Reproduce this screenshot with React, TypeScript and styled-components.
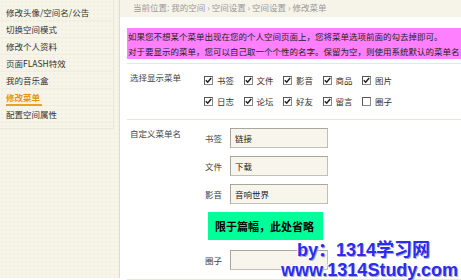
import React from "react";
import styled, { createGlobalStyle } from "styled-components";

const GlobalStyle = createGlobalStyle`
  html, body {
    margin: 0;
    padding: 0;
    background: #ffffff;
  }
  body {
    font-family: "Noto Sans CJK SC", "Noto Sans", sans-serif;
    font-size: 8.5px;
    color: #333;
  }
`;

const sideMenu = [
  "修改头像/空间名/公告",
  "切换空间模式",
  "修改个人资料",
  "页面FLASH特效",
  "我的音乐盒",
  "修改菜单",
  "配置空间属性",
];

const menus = [
  { name: "书签", on: true },
  { name: "文件", on: true },
  { name: "影音", on: true },
  { name: "商品", on: true },
  { name: "图片", on: true },
  { name: "日志", on: true },
  { name: "论坛", on: true },
  { name: "好友", on: true },
  { name: "留言", on: true },
  { name: "圈子", on: false },
];

const names = [
  { label: "书签", value: "链接" },
  { label: "文件", value: "下载" },
  { label: "影音", value: "音响世界" },
];

const CheckIcon = () => (
  <svg width="7" height="7" viewBox="0 0 7 7">
    <path d="M0.8 3.2 L2.7 5.2 L6.2 1" fill="none" stroke="#222" strokeWidth="1.5" />
  </svg>
);

export default function App() {
  return (
    <>
      <GlobalStyle />
      <Page>
        <Sidebar>
          <MenuPanel>
            {sideMenu.map((item) => (
              <MenuItem key={item}>
                <MenuText $active={item === "修改菜单"}>{item}</MenuText>
              </MenuItem>
            ))}
          </MenuPanel>
        </Sidebar>
        <Main>
          <Crumbs>当前位置: 我的空间 › 空间设置 › 空间设置 › 修改菜单</Crumbs>
          <Notice>
            <p>如果您不想某个菜单出现在您的个人空间页面上，您将菜单选项前面的勾去掉即可。</p>
            <p>对于要显示的菜单，您可以自己取一个个性的名字。保留为空，则使用系统默认的菜单名</p>
          </Notice>
          <Form>
            <Row $height={55}>
              <RowLabel>选择显示菜单</RowLabel>
              <CheckGrid>
                {menus.map((m) => (
                  <CheckItem key={m.name}>
                    <Box>{m.on && <CheckIcon />}</Box>
                    {m.name}
                  </CheckItem>
                ))}
              </CheckGrid>
            </Row>
            <Row $height={159}>
              <RowLabel>自定义菜单名</RowLabel>
              <Fields>
                {names.map((n) => (
                  <Field key={n.label}>
                    <FieldLabel>{n.label}</FieldLabel>
                    <Input>{n.value}</Input>
                  </Field>
                ))}
                <Omitted>限于篇幅，此处省略</Omitted>
                <Field>
                  <FieldLabel>圈子</FieldLabel>
                  <Input />
                </Field>
              </Fields>
            </Row>
          </Form>
        </Main>
        <Watermark>
          <WaterLine $indent={16}>by：1314学习网</WaterLine>
          <WaterLine $indent={0}>www.1314Study.com</WaterLine>
        </Watermark>
      </Page>
    </>
  );
}

const Page = styled.div`
  position: relative;
  display: flex;
  width: 461px;
  height: 280px;
  overflow: hidden;
`;

const Sidebar = styled.div`
  width: 119px;
  height: 278px;
  flex-shrink: 0;
  background-color: #f7f5ea;
  background-image: radial-gradient(#ebe7d6 0.6px, transparent 0.8px);
  background-size: 4px 4px;
  border-right: 1px solid #dedbd0;
`;

const MenuPanel = styled.div`
  width: 113px;
  padding: 4px 0 5px;
  border-right: 1px solid #ebe8da;
  border-bottom: 1px solid #ebe8da;
`;

const MenuItem = styled.div`
  height: 16px;
  line-height: 16px;
  padding-left: 6px;
  border-bottom: 1px solid #efece0;
  white-space: nowrap;
`;

const MenuText = styled.span<{ $active: boolean }>`
  display: inline-block;
  height: 15px;
  padding-right: 2px;
  color: ${(p) => (p.$active ? "#e8940c" : "#333")};
  font-weight: ${(p) => (p.$active ? "bold" : "normal")};
  border-bottom: 2px solid ${(p) => (p.$active ? "#f0a020" : "transparent")};
`;

const Main = styled.div`
  flex: 1;
  display: flex;
  flex-direction: column;
`;

const Crumbs = styled.div`
  height: 17px;
  line-height: 15px;
  padding-left: 13px;
  background: #f6f4e9;
  color: #999;
  white-space: nowrap;
`;

const Notice = styled.div`
  margin: 11px 1px 4px 7px;
  height: 31px;
  padding: 0 1px;
  background: #ff80ff;
  color: #222;
  white-space: nowrap;
  overflow: hidden;

  p {
    margin: 0;
    height: 16px;
    line-height: 16px;
  }
  p + p {
    height: 15px;
    line-height: 15px;
  }
`;

const Form = styled.div`
  margin-left: 7px;
`;

const Row = styled.div<{ $height: number }>`
  display: flex;
  height: ${(p) => p.$height}px;
  border-top: 1px solid #e9e7dc;
  &:last-child {
    border-bottom: 1px solid #e9e7dc;
  }
`;

const RowLabel = styled.div`
  width: 74px;
  padding: 7px 0 0 3px;
  color: #444;
  white-space: nowrap;
`;

const CheckGrid = styled.div`
  display: grid;
  grid-template-columns: repeat(5, 39.5px);
  row-gap: 9px;
  padding-top: 10px;
  align-content: start;
`;

const CheckItem = styled.div`
  display: flex;
  align-items: center;
  gap: 4px;
  height: 12px;
  color: #333;
  white-space: nowrap;
`;

const Box = styled.span`
  display: flex;
  align-items: center;
  justify-content: center;
  width: 7px;
  height: 7px;
  background: #fff;
  border: 1px solid #888;
  border-top-color: #555;
  border-left-color: #555;
`;

const Fields = styled.div`
  display: flex;
  flex-direction: column;
  padding-top: 8px;
`;

const Field = styled.div`
  display: flex;
  align-items: center;
  gap: 8px;
  margin-bottom: 8px;
`;

const FieldLabel = styled.div`
  width: 18px;
  text-align: right;
  color: #444;
  white-space: nowrap;
`;

const Input = styled.div`
  box-sizing: border-box;
  width: 98px;
  height: 20px;
  line-height: 18px;
  padding-left: 4px;
  background: #f8f6ec;
  border: 1px solid #c2c0b4;
  border-top-color: #a9a79c;
  border-left-color: #a9a79c;
  color: #222;
`;

const Omitted = styled.div`
  box-sizing: border-box;
  width: 115px;
  height: 28px;
  margin: 0 0 10px 4px;
  padding-left: 7px;
  line-height: 28px;
  background: #00ff99;
  color: #000;
  font-size: 11px;
  font-weight: bold;
  white-space: nowrap;
`;

const Watermark = styled.div`
  position: absolute;
  left: 281px;
  top: 240px;
  font-family: "Liberation Sans", "Noto Sans CJK SC", sans-serif;
  font-size: 18px;
  font-weight: bold;
  color: #2b2bf2;
  text-shadow: -1px -1px 0 #ffffff, 1px 1px 0 #a8a8c8;
  white-space: nowrap;
  pointer-events: none;
`;

const WaterLine = styled.div<{ $indent: number }>`
  height: 20px;
  line-height: 20px;
  padding-left: ${(p) => p.$indent}px;
`;
